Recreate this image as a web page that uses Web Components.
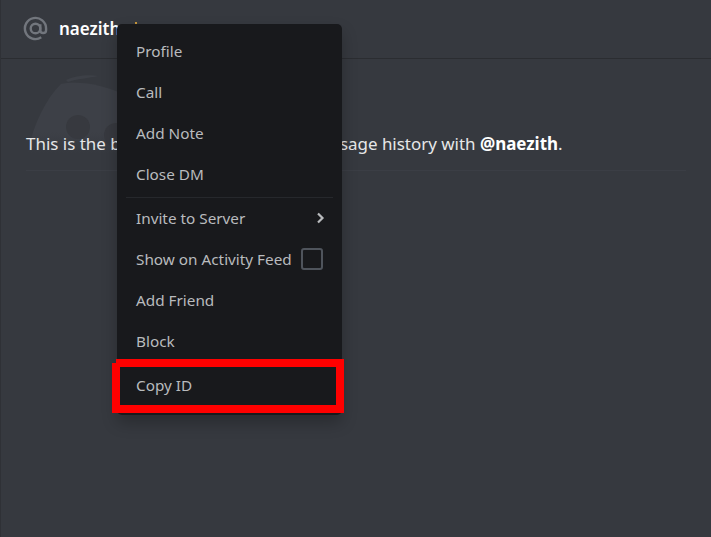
<!DOCTYPE html>
<html>
<head>
<meta charset="utf-8">
<title>naezith</title>
<style>
    html, body {
        margin: 0;
        height: 100%;
        background: #36393f;
        overflow: hidden;
    }
</style>
</head>
<body>
<dm-page>
    <dm-header slot="header" name="naezith"></dm-header>
    <dm-welcome slot="content" name="naezith"></dm-welcome>
    <context-menu slot="overlay">
        <menu-item>Profile</menu-item>
        <menu-item>Call</menu-item>
        <menu-item>Add Note</menu-item>
        <menu-item>Close DM</menu-item>
        <menu-separator></menu-separator>
        <menu-item type="submenu">Invite to Server</menu-item>
        <menu-item type="checkbox">Show on Activity Feed</menu-item>
        <menu-item>Add Friend</menu-item>
        <menu-item>Block</menu-item>
        <menu-separator></menu-separator>
        <menu-item>Copy ID</menu-item>
    </context-menu>
    <red-highlight slot="overlay"></red-highlight>
</dm-page>

<script>
class DmPage extends HTMLElement {
    constructor() {
        super();
        this.attachShadow({ mode: 'open' });
        this.shadowRoot.innerHTML = `
            <style>
                :host {
                    display: flex;
                    flex-direction: column;
                    position: relative;
                    width: 711px;
                    height: 537px;
                    box-sizing: border-box;
                    border-left: 1px solid #2f3136;
                    font-family: "Noto Sans", "Open Sans", sans-serif;
                    overflow: hidden;
                }
            </style>
            <slot name="header"></slot>
            <slot name="content"></slot>
            <slot name="overlay"></slot>
        `;
    }
}

class DmHeader extends HTMLElement {
    constructor() {
        super();
        this.attachShadow({ mode: 'open' });
        this.shadowRoot.innerHTML = `
            <style>
                :host {
                    display: flex;
                    align-items: center;
                    position: relative;
                    height: 59px;
                    box-sizing: border-box;
                    padding: 0 0 1px 22px;
                    gap: 11px;
                    border-bottom: 1px solid #2b2d31;
                }
                svg { display: block; }
                .name {
                    color: #fff;
                    font-size: 17px;
                    font-weight: 600;
                }
                /* bit of the status emoji that shows above the menu */
                .status {
                    position: absolute;
                    left: 134px;
                    top: 22px;
                    width: 2px;
                    height: 2px;
                    background: #c9973a;
                }
            </style>
            <svg width="25" height="25" viewBox="0 0 26 26" fill="none" stroke="#72767d" stroke-width="2.5">
                <circle cx="13" cy="13" r="5"/>
                <path d="M18 8.5v6.2a3 3 0 0 0 6 0V13a11 11 0 1 0-5 9.2"/>
            </svg>
            <span class="name">${this.getAttribute('name')}</span>
            <span class="status"></span>
        `;
    }
}

class DmWelcome extends HTMLElement {
    constructor() {
        super();
        this.attachShadow({ mode: 'open' });
        this.shadowRoot.innerHTML = `
            <style>
                :host {
                    display: block;
                    position: relative;
                    margin: 0 25px;
                    padding-top: 73px;
                    color: #e6e7e8;
                    font-size: 16.95px;
                }
                p {
                    margin: 0;
                    padding-bottom: 14px;
                    line-height: 24px;
                    border-bottom: 1px solid #3b3e45;
                    white-space: nowrap;
                    position: relative;
                }
                b { color: #fff; font-weight: 700; }
                svg {
                    position: absolute;
                    left: -6px;
                    top: 14px;
                }
            </style>
            <svg width="110" height="80" viewBox="0 0 110 80">
                <defs>
                    <linearGradient id="fade" x1="0" y1="0" x2="0" y2="1">
                        <stop offset="0.7" stop-color="#3d4047"/>
                        <stop offset="1" stop-color="#36393f"/>
                    </linearGradient>
                </defs>
                <path fill="url(#fade)" d="M8 78C14 50 26 26 41 11c16-3 42-1 69 14v55H8Z"/>
                <path fill="#3d4047" d="M46 7C54 3 68 1 78 3 70 5 56 6 48 9Z"/>
                <circle cx="58" cy="54" r="12" fill="#37393f"/>
                <circle cx="96" cy="62" r="12" fill="#37393f"/>
            </svg>
            <p>This is the beginning of your direct message history with <b>@${this.getAttribute('name')}</b>.</p>
        `;
    }
}

class ContextMenu extends HTMLElement {
    constructor() {
        super();
        this.attachShadow({ mode: 'open' });
        this.shadowRoot.innerHTML = `
            <style>
                :host {
                    display: flex;
                    flex-direction: column;
                    position: absolute;
                    left: 116px;
                    top: 24px;
                    width: 225px;
                    box-sizing: border-box;
                    padding: 8px 9px;
                    background: #18191c;
                    border-radius: 5px;
                    box-shadow: 0 8px 16px rgba(0, 0, 0, 0.24);
                }
            </style>
            <slot></slot>
        `;
    }
}

class MenuItem extends HTMLElement {
    constructor() {
        super();
        this.attachShadow({ mode: 'open' });
        const type = this.getAttribute('type');
        let extra = '';
        if (type === 'submenu') {
            extra = `<svg width="10" height="14" viewBox="0 0 10 14" fill="none" stroke="#b9bbbe" stroke-width="2.2"><path d="M2 2.5 6.5 7 2 11.5"/></svg>`;
        } else if (type === 'checkbox') {
            extra = `<span class="box"></span>`;
        }
        this.shadowRoot.innerHTML = `
            <style>
                :host {
                    display: flex;
                    align-items: center;
                    justify-content: space-between;
                    height: 40.96px;
                    flex: none;
                    box-sizing: border-box;
                    padding: 0 10px 2px 10px;
                    color: #b9bbbe;
                    font-size: 15.3px;
                    white-space: nowrap;
                }
                .box {
                    width: 22px;
                    height: 22px;
                    box-sizing: border-box;
                    border: 2px solid #4f545c;
                    border-radius: 3px;
                }
                svg { margin-right: -3px; }
            </style>
            <slot></slot>${extra}
        `;
    }
}

class MenuSeparator extends HTMLElement {
    constructor() {
        super();
        this.attachShadow({ mode: 'open' });
        this.shadowRoot.innerHTML = `
            <style>
                :host {
                    display: block;
                    flex: none;
                    height: 1px;
                    margin: 1px 0;
                    background: #26282c;
                }
            </style>
        `;
    }
}

class RedHighlight extends HTMLElement {
    constructor() {
        super();
        this.attachShadow({ mode: 'open' });
        this.shadowRoot.innerHTML = `
            <style>
                :host {
                    display: block;
                    position: absolute;
                    left: 111px;
                    top: 359px;
                    width: 232px;
                    height: 54px;
                    box-sizing: border-box;
                    border: 8px solid #ff0000;
                    clip-path: polygon(4px 0, 100% 0, 100% 100%, 0 100%, 0 4px, 4px 4px);
                }
            </style>
        `;
    }
}

customElements.define('dm-page', DmPage);
customElements.define('dm-header', DmHeader);
customElements.define('dm-welcome', DmWelcome);
customElements.define('context-menu', ContextMenu);
customElements.define('menu-item', MenuItem);
customElements.define('menu-separator', MenuSeparator);
customElements.define('red-highlight', RedHighlight);
</script>
</body>
</html>
